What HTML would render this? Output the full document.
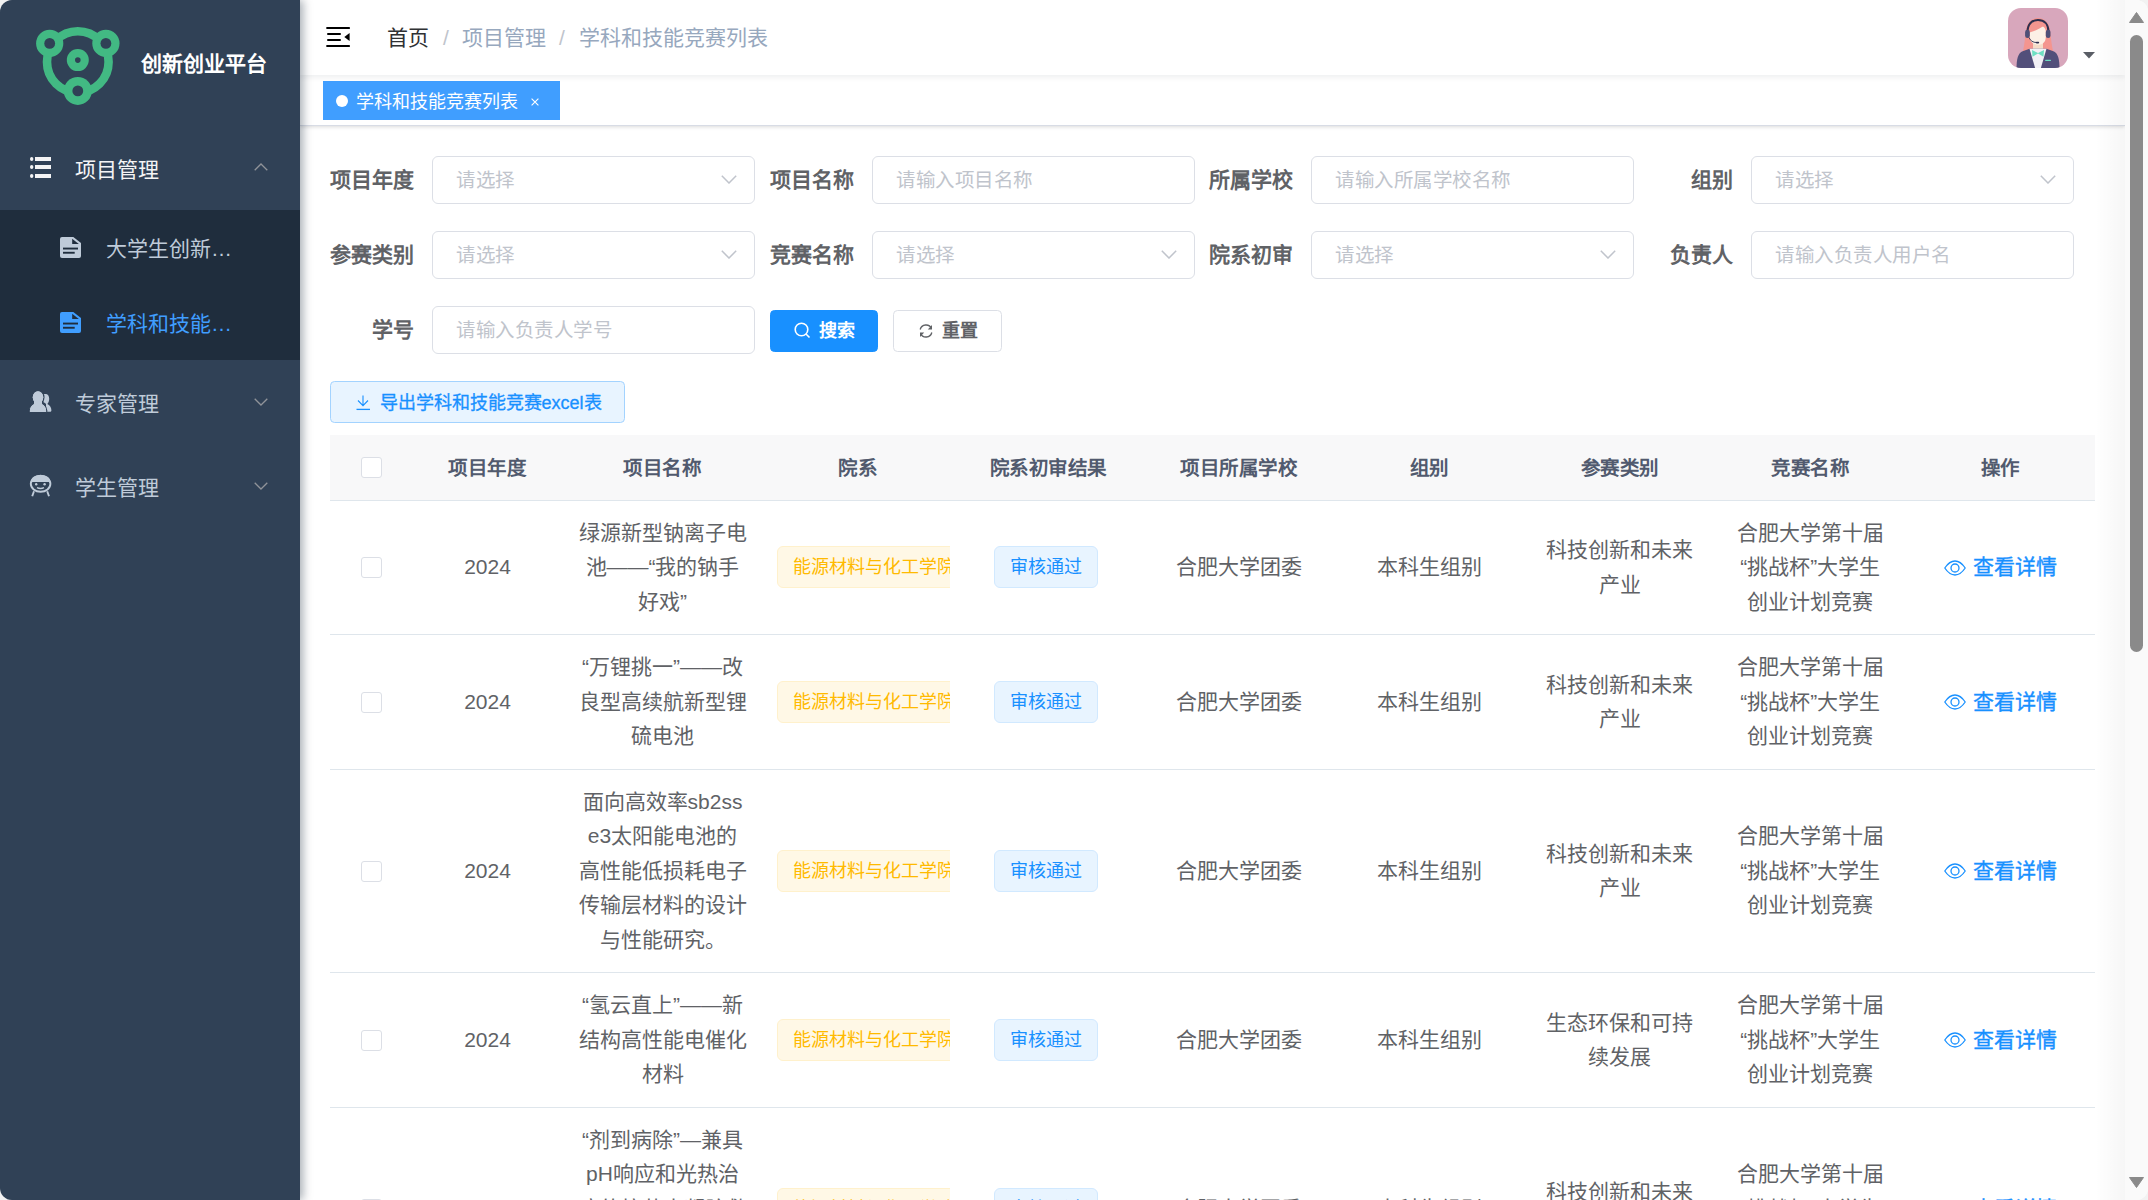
<!DOCTYPE html><html lang="zh-CN"><head><meta charset="utf-8"><style>
*{box-sizing:border-box;margin:0;padding:0}
html,body{width:2148px;height:1200px;overflow:hidden;background:#f2f2f2}
body{font-family:"Liberation Sans",sans-serif;color:#606266}
.frame{position:absolute;left:0;top:0;width:2148px;height:1200px;border-radius:12px;overflow:hidden;background:#fff}
.abs{position:absolute}
.nw{white-space:nowrap}
.side{position:absolute;left:0;top:0;width:300px;height:1200px;background:#304156;z-index:5;box-shadow:3px 0 9px rgba(0,21,41,.35)}
.logo-title{position:absolute;left:141px;top:48px;font-size:21px;font-weight:bold;color:#fff;line-height:32px;white-space:nowrap}
.mi{position:absolute;left:0;width:300px;height:84px;line-height:84px;font-size:21px;color:#bfcbd9;white-space:nowrap}
.mi .t{position:absolute;left:75.4px;top:1px}
.sub{position:absolute;left:0;top:210px;width:300px;height:150px;background:#1f2d3d}
.si{position:absolute;left:0;width:300px;height:75px;line-height:75px;font-size:21px;color:#bfcbd9;white-space:nowrap}
.si .t{position:absolute;left:106px;top:1px;width:128px;overflow:hidden;text-overflow:ellipsis}
.navbar{position:absolute;left:300px;top:0;width:1825px;height:75px;background:#fff;z-index:3;box-shadow:0 1.5px 6px rgba(0,21,41,.08)}
.bc{position:absolute;top:0;line-height:75px;font-size:21px;color:#97a8be;white-space:nowrap}
.tags{position:absolute;left:300px;top:75px;width:1825px;height:51px;background:#fff;border-bottom:1px solid #d8dce5;box-shadow:0 1px 4px 0 rgba(0,0,0,.12),0 0 4px 0 rgba(0,0,0,.04);z-index:2}
.tag-active{position:absolute;left:23px;top:6px;width:237px;height:39px;background:#409eff;color:#fff;font-size:18px;line-height:39px;white-space:nowrap}
.lbl{position:absolute;height:48px;line-height:48px;font-size:21px;font-weight:bold;color:#606266;white-space:nowrap;text-align:right}
.inp{position:absolute;width:323px;height:48px;border:1px solid #dcdfe6;border-radius:6px;background:#fff;font-size:19.5px;letter-spacing:-0.5px;color:#c0c4cc;line-height:46px;padding-left:23px;white-space:nowrap}
.inp svg{position:absolute;right:17px;top:18px}
.btn{position:absolute;height:42px;border-radius:4.5px;font-size:18px;line-height:40px;white-space:nowrap}
.th{position:absolute;top:435.5px;height:65px;line-height:65px;font-size:19.5px;letter-spacing:-0.5px;text-indent:-0.5px;font-weight:bold;color:#515a6e;text-align:center;white-space:nowrap}
.td{position:absolute;text-align:center;font-size:21px;line-height:34.5px;margin-top:0.5px;color:#606266;white-space:nowrap}
.hl{position:absolute;left:330px;width:1765px;height:1px;background:#dfe6ec}
.cb{position:absolute;width:21px;height:21px;border:1px solid #dcdfe6;border-radius:3px;background:#fff}
.tagw{position:absolute;height:42px;line-height:40px;font-size:18px;white-space:nowrap;border-radius:6px;padding:0 15px}
.op{position:absolute;font-size:21px;line-height:30px;color:#1890ff;white-space:nowrap;-webkit-text-stroke:0.35px #1890ff}
</style></head><body><div class="frame">
<div class="side">
<svg class="abs" style="left:0;top:0" width="300" height="130" viewBox="0 0 300 130">
<g fill="none" stroke="#42b983" stroke-width="8.6">
<circle cx="77.8" cy="62" r="30.8"/>
</g>
<g fill="#42b983">
<circle cx="49.7" cy="43.4" r="13.6"/><circle cx="105.9" cy="43.4" r="13.6"/><circle cx="77.8" cy="90.9" r="14"/><circle cx="77.8" cy="60.1" r="11"/>
</g>
<g fill="#304156">
<circle cx="49.7" cy="43.4" r="5.4"/><circle cx="105.9" cy="43.4" r="5.4"/><circle cx="77.8" cy="90.9" r="5.4"/><circle cx="77.8" cy="60.1" r="2.8"/>
</g>
</svg>
<div class="logo-title">创新创业平台</div>
<div class="mi" style="top:127px;color:#f4f4f5"><span class="t">项目管理</span><svg class="abs" style="left:30px;top:30px" width="22" height="24" viewBox="0 0 22 24" fill="#f4f4f5"><ellipse cx="1.7" cy="2" rx="1.7" ry="2"/><rect x="5" y="0" width="16" height="4"/><ellipse cx="1.7" cy="10" rx="1.7" ry="2"/><rect x="5" y="8" width="16" height="4"/><ellipse cx="1.7" cy="19" rx="1.7" ry="2"/><rect x="5" y="17" width="16" height="4"/></svg><svg class="abs" style="left:254px;top:36px" width="14" height="8" viewBox="0 0 14 8"><path d="M0.7 7.3 L7 1 L13.3 7.3" fill="none" stroke="#909399" stroke-width="1.3"/></svg></div>
<div class="sub">
<div class="si" style="top:0"><svg class="abs" style="left:60px;top:27px" width="21" height="21" viewBox="0 0 21 21"><path d="M2 0 H13.3 L21 6 V19 a2 2 0 0 1 -2 2 H2 a2 2 0 0 1 -2 -2 V2 a2 2 0 0 1 2 -2Z" fill="#bfcbd9"/><path d="M12.2 1.7 V6.9 H18.8Z" fill="#1f2d3d"/><rect x="3" y="10.6" width="15" height="1.9" fill="#1f2d3d"/><rect x="3" y="14.8" width="11.7" height="1.9" fill="#1f2d3d"/></svg><span class="t">大学生创新创业训练计划</span></div>
<div class="si" style="top:75px;color:#409eff"><svg class="abs" style="left:60px;top:27px" width="21" height="21" viewBox="0 0 21 21"><path d="M2 0 H13.3 L21 6 V19 a2 2 0 0 1 -2 2 H2 a2 2 0 0 1 -2 -2 V2 a2 2 0 0 1 2 -2Z" fill="#409eff"/><path d="M12.2 1.7 V6.9 H18.8Z" fill="#1f2d3d"/><rect x="3" y="10.6" width="15" height="1.9" fill="#1f2d3d"/><rect x="3" y="14.8" width="11.7" height="1.9" fill="#1f2d3d"/></svg><span class="t">学科和技能竞赛列表</span></div>
</div>
<div class="mi" style="top:361px"><span class="t">专家管理</span><svg class="abs" style="left:25px;top:24px" width="30" height="30" viewBox="0 0 30 30"><path d="M18.5 9.3 C19.3 9 20.3 8.9 21.2 9 C23 9.3 24.2 11.2 24.2 13.8 C24.2 16 23.5 17.8 22.3 18.9 C24.8 19.9 26.4 22.4 26.4 25.3 C26.4 26.3 25.8 26.8 25 26.8 H21 V19 C20 18 19 17.5 18.5 17.3Z" fill="#bfcbd9"/><g fill="#bfcbd9" stroke="#304156" stroke-width="1.3"><ellipse cx="13" cy="12.3" rx="5.9" ry="6.6"/><path d="M5.5 27.6 C4.2 27.6 4.2 26.5 4.2 26 C4.5 20.8 8 17.6 13 17.6 C18 17.6 21.5 20.8 21.8 26 C21.8 26.5 21.8 27.6 20.5 27.6Z"/></g><ellipse cx="13" cy="12.3" rx="5.3" ry="6" fill="#bfcbd9"/><path d="M4.85 27 C4.85 26.5 4.85 26 4.85 26 C5.2 21.3 8.3 18.2 13 18.2 C17.7 18.2 20.8 21.3 21.15 26 V27Z" fill="#bfcbd9"/><rect x="9" y="15" width="8" height="5" fill="#bfcbd9"/></svg><svg class="abs" style="left:254px;top:36.8px" width="14" height="8" viewBox="0 0 14 8"><path d="M0.7 0.7 L7 7 L13.3 0.7" fill="none" stroke="#909399" stroke-width="1.3"/></svg></div>
<div class="mi" style="top:445px"><span class="t">学生管理</span><svg class="abs" style="left:25px;top:25px" width="32" height="30" viewBox="0 0 32 30"><ellipse cx="15.6" cy="13.8" rx="9.8" ry="8" fill="none" stroke="#bfcbd9" stroke-width="1.9"/><path d="M5.8 12 C6 7.5 10 5 15.6 5 C21.2 5 25.2 7.5 25.4 12Z" fill="#bfcbd9"/><circle cx="11.2" cy="14.3" r="1.2" fill="#bfcbd9"/><circle cx="19.6" cy="14.3" r="1.2" fill="#bfcbd9"/><path d="M12 17.6 Q15.5 19.2 19 17.6" fill="none" stroke="#bfcbd9" stroke-width="1.5"/><path d="M9 21.2 L7.2 26.2 M22.2 21.2 L24 26.2" fill="none" stroke="#bfcbd9" stroke-width="1.9"/></svg><svg class="abs" style="left:254px;top:36.8px" width="14" height="8" viewBox="0 0 14 8"><path d="M0.7 0.7 L7 7 L13.3 0.7" fill="none" stroke="#909399" stroke-width="1.3"/></svg></div>
</div>
<div class="navbar">
<svg class="abs" style="left:26px;top:26px" width="25" height="22" viewBox="0 0 25 22" fill="#000"><rect x="0.3" y="1" width="23.6" height="2" rx="0.5"/><rect x="1" y="7" width="14" height="2" rx="1"/><rect x="1" y="13" width="14" height="2" rx="1"/><rect x="0.3" y="19" width="23.6" height="2" rx="0.5"/><path d="M23.6 7 V15 L18.3 11Z"/></svg>
<div class="bc" style="left:87.3px;color:#303133">首页</div>
<div class="bc" style="left:143px;color:#c0c4cc">/</div>
<div class="bc" style="left:162px">项目管理</div>
<div class="bc" style="left:259px;color:#c0c4cc">/</div>
<div class="bc" style="left:279px">学科和技能竞赛列表</div>
<svg class="abs" style="left:1708px;top:8px" width="60" height="60" viewBox="0 0 60 60">
<defs><clipPath id="av"><rect width="60" height="60" rx="13"/></clipPath></defs>
<g clip-path="url(#av)">
<rect width="60" height="60" fill="#d8a7bc"/>
<path d="M15 43 C16.5 36 17 30 18 22 C19 14 24 10 30 10 C36 10 41 14 42 22 C43 30 43.5 36 45 43Z" fill="#f4958f"/>
<path d="M25 33 H35 V43 H25Z" fill="#f5dcc8"/>
<path d="M21.8 24 C21.8 19.5 25 17.4 30 17.4 C35 17.4 37.8 19.5 37.8 24 V29 C37.8 34 34.5 36.8 30 36.8 C25.5 36.8 21.8 34 21.8 29Z" fill="#fcf0e6"/>
<path d="M21 26 C21 19 24 15.5 30 15 C33 15 35 15.5 36.5 16.5 C34 20 28 22.5 21.5 24.5Z" fill="#f4958f"/>
<path d="M19.5 24 C19.5 16 24 12 30 12 C36 12 40.5 16 40.5 24" fill="none" stroke="#2e2f4f" stroke-width="2.1"/>
<rect x="17.1" y="21.8" width="4.7" height="8.3" rx="2.3" fill="#4e4f78"/><rect x="37.8" y="21.8" width="4.7" height="8.3" rx="2.3" fill="#4e4f78"/>
<path d="M21 29.5 C22.5 33 25 34.5 28.5 34.5" fill="none" stroke="#2e2f4f" stroke-width="0.9"/><rect x="27.8" y="33.8" width="3.4" height="1.6" rx="0.8" fill="#2e2f4f"/>
<path d="M8.5 62 C8.5 52 9.5 46 14 43.5 L21.5 40.8 H38.5 L46 43.5 C50.5 46 51.5 52 51.5 62Z" fill="#524f7a"/>
<path d="M21.5 40.8 H38.5 L32.3 62 H27.7Z" fill="#f2f0f5"/>
<path d="M24 42 L30 45 L36 42 L35.5 48.7 L30 45.5 L24.5 48.7Z" fill="#6ee0c3"/>
<rect x="37.2" y="51.7" width="5.7" height="1.4" rx="0.4" fill="#6ee0c3"/>
</g></svg>
<svg class="abs" style="left:1783px;top:52px" width="12" height="7" viewBox="0 0 12 7"><path d="M0 0 H12 L6 6.5Z" fill="#5a5e66"/></svg>
</div>
<div class="tags"><div class="tag-active"><span class="abs" style="left:13px;top:14px;width:12px;height:12px;border-radius:50%;background:#fff"></span><span class="abs" style="left:33px;top:1.5px">学科和技能竞赛列表</span><svg class="abs" style="left:208px;top:16.5px" width="8" height="8" viewBox="0 0 8 8"><path d="M0.6 0.6 L7.4 7.4 M7.4 0.6 L0.6 7.4" stroke="#fff" stroke-width="1.1"/></svg></div></div>
<div class="lbl" style="left:132px;width:282px;top:156px">项目年度</div>
<div class="inp" style="left:432px;top:156px">请选择<svg width="16" height="9" viewBox="0 0 16 9"><path d="M0.8 0.8 L8 8 L15.2 0.8" fill="none" stroke="#c0c4cc" stroke-width="1.5"/></svg></div>
<div class="lbl" style="left:572px;width:282px;top:156px">项目名称</div>
<div class="inp" style="left:872px;top:156px">请输入项目名称</div>
<div class="lbl" style="left:1011px;width:282px;top:156px">所属学校</div>
<div class="inp" style="left:1311px;top:156px">请输入所属学校名称</div>
<div class="lbl" style="left:1451px;width:282px;top:156px">组别</div>
<div class="inp" style="left:1751px;top:156px">请选择<svg width="16" height="9" viewBox="0 0 16 9"><path d="M0.8 0.8 L8 8 L15.2 0.8" fill="none" stroke="#c0c4cc" stroke-width="1.5"/></svg></div>
<div class="lbl" style="left:132px;width:282px;top:231px">参赛类别</div>
<div class="inp" style="left:432px;top:231px">请选择<svg width="16" height="9" viewBox="0 0 16 9"><path d="M0.8 0.8 L8 8 L15.2 0.8" fill="none" stroke="#c0c4cc" stroke-width="1.5"/></svg></div>
<div class="lbl" style="left:572px;width:282px;top:231px">竞赛名称</div>
<div class="inp" style="left:872px;top:231px">请选择<svg width="16" height="9" viewBox="0 0 16 9"><path d="M0.8 0.8 L8 8 L15.2 0.8" fill="none" stroke="#c0c4cc" stroke-width="1.5"/></svg></div>
<div class="lbl" style="left:1011px;width:282px;top:231px">院系初审</div>
<div class="inp" style="left:1311px;top:231px">请选择<svg width="16" height="9" viewBox="0 0 16 9"><path d="M0.8 0.8 L8 8 L15.2 0.8" fill="none" stroke="#c0c4cc" stroke-width="1.5"/></svg></div>
<div class="lbl" style="left:1451px;width:282px;top:231px">负责人</div>
<div class="inp" style="left:1751px;top:231px">请输入负责人用户名</div>
<div class="lbl" style="left:132px;width:282px;top:306px">学号</div>
<div class="inp" style="left:432px;top:306px">请输入负责人学号</div>
<div class="btn" style="left:770px;top:310px;width:108px;background:#1890ff;border:1px solid #1890ff;color:#fff"><svg class="abs" style="left:23px;top:11px" width="17" height="17" viewBox="0 0 17 17"><circle cx="7.5" cy="7.5" r="6.3" fill="none" stroke="#fff" stroke-width="1.6"/><path d="M12 12 L15.5 15.5" stroke="#fff" stroke-width="1.6"/></svg><span class="abs" style="left:48px;top:0;font-weight:bold">搜索</span></div>
<div class="btn" style="left:893px;top:310px;width:109px;background:#fff;border:1px solid #dcdfe6;color:#606266"><svg class="abs" style="left:24px;top:12px" width="16" height="16" viewBox="0 0 16 16"><path d="M13.5 5.5 A6 6 0 0 0 2.2 6.5" fill="none" stroke="#606266" stroke-width="1.4"/><path d="M2.5 10.5 A6 6 0 0 0 13.8 9.5" fill="none" stroke="#606266" stroke-width="1.4"/><path d="M14 2 V6.5 H9.8Z" fill="#606266"/><path d="M2 14 V9.5 H6.2Z" fill="#606266"/></svg><span class="abs" style="left:48px;top:0;font-weight:bold">重置</span></div>
<div class="btn" style="left:330px;top:381px;width:295px;background:#e8f4ff;border:1px solid #a3d3ff;color:#1890ff"><svg class="abs" style="left:25px;top:13px" width="15" height="16" viewBox="0 0 15 16"><path d="M7 0.6 V10.5 M2 5.5 L7 10.6 L12 5.5" fill="none" stroke="#1890ff" stroke-width="1.1"/><path d="M0.5 14.4 H14" stroke="#1890ff" stroke-width="1.3"/></svg><span class="abs" style="left:48.5px;top:1px;-webkit-text-stroke:0.3px #1890ff">导出学科和技能竞赛excel表</span></div>
<div class="abs" style="left:330px;top:435px;width:1765px;height:65px;background:#f8f8f9"></div>
<div class="cb" style="left:361px;top:457px"></div>
<div class="th" style="left:412.5px;width:150.0px">项目年度</div>
<div class="th" style="left:562.5px;width:200.0px">项目名称</div>
<div class="th" style="left:762.5px;width:190.5px">院系</div>
<div class="th" style="left:953px;width:190.5px">院系初审结果</div>
<div class="th" style="left:1143.5px;width:190.5px">项目所属学校</div>
<div class="th" style="left:1334px;width:190.5px">组别</div>
<div class="th" style="left:1524.5px;width:190.5px">参赛类别</div>
<div class="th" style="left:1715px;width:190.5px">竞赛名称</div>
<div class="th" style="left:1905.5px;width:189.5px">操作</div>
<div class="hl" style="top:500px"></div>
<div class="cb" style="left:361px;top:557.0px"></div>
<div class="td" style="left:412.5px;width:150.0px;top:549.75px">2024</div>
<div class="td" style="left:562.5px;width:200.0px;top:515.25px">绿源新型钠离子电<br>池——“我的钠手<br>好戏”</div>
<div class="abs" style="left:762.5px;top:545.0px;width:187.5px;height:44px;overflow:hidden"><div class="tagw" style="left:14.5px;top:1px;background:#fff8e6;border:1px solid #fff1cc;color:#ffba00">能源材料与化工学院</div></div>
<div class="tagw" style="left:994px;top:546.0px;width:104px;background:#e8f4ff;border:1px solid #d1e9ff;color:#1890ff">审核通过</div>
<div class="td" style="left:1143.5px;width:190.5px;top:549.75px">合肥大学团委</div>
<div class="td" style="left:1334px;width:190.5px;top:549.75px">本科生组别</div>
<div class="td" style="left:1524.5px;width:190.5px;top:532.50px">科技创新和未来<br>产业</div>
<div class="td" style="left:1715px;width:190.5px;top:515.25px">合肥大学第十届<br>“挑战杯”大学生<br>创业计划竞赛</div>
<div class="op" style="left:1944px;top:552.0px"><svg class="abs" style="left:0;top:7.5px" width="22" height="16" viewBox="0 0 22 16"><path d="M0.8 8 C4 3.2 7.2 1 11 1 C14.8 1 18 3.2 21.2 8 C18 12.8 14.8 15 11 15 C7.2 15 4 12.8 0.8 8Z" fill="none" stroke="#1890ff" stroke-width="1.3"/><circle cx="11" cy="8" r="4" fill="none" stroke="#1890ff" stroke-width="1.3"/></svg><span style="margin-left:29px">查看详情</span></div>
<div class="hl" style="top:634px"></div>
<div class="cb" style="left:361px;top:691.5px"></div>
<div class="td" style="left:412.5px;width:150.0px;top:684.25px">2024</div>
<div class="td" style="left:562.5px;width:200.0px;top:649.75px">“万锂挑一”——改<br>良型高续航新型锂<br>硫电池</div>
<div class="abs" style="left:762.5px;top:679.5px;width:187.5px;height:44px;overflow:hidden"><div class="tagw" style="left:14.5px;top:1px;background:#fff8e6;border:1px solid #fff1cc;color:#ffba00">能源材料与化工学院</div></div>
<div class="tagw" style="left:994px;top:680.5px;width:104px;background:#e8f4ff;border:1px solid #d1e9ff;color:#1890ff">审核通过</div>
<div class="td" style="left:1143.5px;width:190.5px;top:684.25px">合肥大学团委</div>
<div class="td" style="left:1334px;width:190.5px;top:684.25px">本科生组别</div>
<div class="td" style="left:1524.5px;width:190.5px;top:667.00px">科技创新和未来<br>产业</div>
<div class="td" style="left:1715px;width:190.5px;top:649.75px">合肥大学第十届<br>“挑战杯”大学生<br>创业计划竞赛</div>
<div class="op" style="left:1944px;top:686.5px"><svg class="abs" style="left:0;top:7.5px" width="22" height="16" viewBox="0 0 22 16"><path d="M0.8 8 C4 3.2 7.2 1 11 1 C14.8 1 18 3.2 21.2 8 C18 12.8 14.8 15 11 15 C7.2 15 4 12.8 0.8 8Z" fill="none" stroke="#1890ff" stroke-width="1.3"/><circle cx="11" cy="8" r="4" fill="none" stroke="#1890ff" stroke-width="1.3"/></svg><span style="margin-left:29px">查看详情</span></div>
<div class="hl" style="top:769px"></div>
<div class="cb" style="left:361px;top:860.5px"></div>
<div class="td" style="left:412.5px;width:150.0px;top:853.25px">2024</div>
<div class="td" style="left:562.5px;width:200.0px;top:784.25px">面向高效率sb2ss<br>e3太阳能电池的<br>高性能低损耗电子<br>传输层材料的设计<br>与性能研究。</div>
<div class="abs" style="left:762.5px;top:848.5px;width:187.5px;height:44px;overflow:hidden"><div class="tagw" style="left:14.5px;top:1px;background:#fff8e6;border:1px solid #fff1cc;color:#ffba00">能源材料与化工学院</div></div>
<div class="tagw" style="left:994px;top:849.5px;width:104px;background:#e8f4ff;border:1px solid #d1e9ff;color:#1890ff">审核通过</div>
<div class="td" style="left:1143.5px;width:190.5px;top:853.25px">合肥大学团委</div>
<div class="td" style="left:1334px;width:190.5px;top:853.25px">本科生组别</div>
<div class="td" style="left:1524.5px;width:190.5px;top:836.00px">科技创新和未来<br>产业</div>
<div class="td" style="left:1715px;width:190.5px;top:818.75px">合肥大学第十届<br>“挑战杯”大学生<br>创业计划竞赛</div>
<div class="op" style="left:1944px;top:855.5px"><svg class="abs" style="left:0;top:7.5px" width="22" height="16" viewBox="0 0 22 16"><path d="M0.8 8 C4 3.2 7.2 1 11 1 C14.8 1 18 3.2 21.2 8 C18 12.8 14.8 15 11 15 C7.2 15 4 12.8 0.8 8Z" fill="none" stroke="#1890ff" stroke-width="1.3"/><circle cx="11" cy="8" r="4" fill="none" stroke="#1890ff" stroke-width="1.3"/></svg><span style="margin-left:29px">查看详情</span></div>
<div class="hl" style="top:972px"></div>
<div class="cb" style="left:361px;top:1029.5px"></div>
<div class="td" style="left:412.5px;width:150.0px;top:1022.25px">2024</div>
<div class="td" style="left:562.5px;width:200.0px;top:987.75px">“氢云直上”——新<br>结构高性能电催化<br>材料</div>
<div class="abs" style="left:762.5px;top:1017.5px;width:187.5px;height:44px;overflow:hidden"><div class="tagw" style="left:14.5px;top:1px;background:#fff8e6;border:1px solid #fff1cc;color:#ffba00">能源材料与化工学院</div></div>
<div class="tagw" style="left:994px;top:1018.5px;width:104px;background:#e8f4ff;border:1px solid #d1e9ff;color:#1890ff">审核通过</div>
<div class="td" style="left:1143.5px;width:190.5px;top:1022.25px">合肥大学团委</div>
<div class="td" style="left:1334px;width:190.5px;top:1022.25px">本科生组别</div>
<div class="td" style="left:1524.5px;width:190.5px;top:1005.00px">生态环保和可持<br>续发展</div>
<div class="td" style="left:1715px;width:190.5px;top:987.75px">合肥大学第十届<br>“挑战杯”大学生<br>创业计划竞赛</div>
<div class="op" style="left:1944px;top:1024.5px"><svg class="abs" style="left:0;top:7.5px" width="22" height="16" viewBox="0 0 22 16"><path d="M0.8 8 C4 3.2 7.2 1 11 1 C14.8 1 18 3.2 21.2 8 C18 12.8 14.8 15 11 15 C7.2 15 4 12.8 0.8 8Z" fill="none" stroke="#1890ff" stroke-width="1.3"/><circle cx="11" cy="8" r="4" fill="none" stroke="#1890ff" stroke-width="1.3"/></svg><span style="margin-left:29px">查看详情</span></div>
<div class="hl" style="top:1107px"></div>
<div class="cb" style="left:361px;top:1198.5px"></div>
<div class="td" style="left:412.5px;width:150.0px;top:1191.25px">2024</div>
<div class="td" style="left:562.5px;width:200.0px;top:1122.25px">“剂到病除”—兼具<br>pH响应和光热治<br>疗的抗菌水凝胶敷<br>料的研制与性能研<br>究</div>
<div class="abs" style="left:762.5px;top:1186.5px;width:187.5px;height:44px;overflow:hidden"><div class="tagw" style="left:14.5px;top:1px;background:#fff8e6;border:1px solid #fff1cc;color:#ffba00">能源材料与化工学院</div></div>
<div class="tagw" style="left:994px;top:1187.5px;width:104px;background:#e8f4ff;border:1px solid #d1e9ff;color:#1890ff">审核通过</div>
<div class="td" style="left:1143.5px;width:190.5px;top:1191.25px">合肥大学团委</div>
<div class="td" style="left:1334px;width:190.5px;top:1191.25px">本科生组别</div>
<div class="td" style="left:1524.5px;width:190.5px;top:1174.00px">科技创新和未来<br>产业</div>
<div class="td" style="left:1715px;width:190.5px;top:1156.75px">合肥大学第十届<br>“挑战杯”大学生<br>创业计划竞赛</div>
<div class="op" style="left:1944px;top:1193.5px"><svg class="abs" style="left:0;top:7.5px" width="22" height="16" viewBox="0 0 22 16"><path d="M0.8 8 C4 3.2 7.2 1 11 1 C14.8 1 18 3.2 21.2 8 C18 12.8 14.8 15 11 15 C7.2 15 4 12.8 0.8 8Z" fill="none" stroke="#1890ff" stroke-width="1.3"/><circle cx="11" cy="8" r="4" fill="none" stroke="#1890ff" stroke-width="1.3"/></svg><span style="margin-left:29px">查看详情</span></div>
<div class="abs" style="left:2095px;top:0;width:30px;height:1200px;background:linear-gradient(to right,rgba(0,0,0,0),rgba(0,0,0,.035));z-index:6"></div>
<div class="abs" style="left:2125px;top:0;width:23px;height:1200px;background:#fafafa;z-index:6"><svg class="abs" style="left:4px;top:12px" width="15" height="11" viewBox="0 0 15 11"><path d="M7.5 0.5 L14.5 10.5 H0.5Z" fill="#8a8a8a" stroke="#8a8a8a" stroke-linejoin="round"/></svg><div class="abs" style="left:5px;top:35px;width:13px;height:617px;border-radius:6.5px;background:#8a8a8a"></div><svg class="abs" style="left:4px;top:1177px" width="15" height="11" viewBox="0 0 15 11"><path d="M0.5 0.5 H14.5 L7.5 10.5Z" fill="#8a8a8a" stroke="#8a8a8a" stroke-linejoin="round"/></svg></div>
</div></body></html>
